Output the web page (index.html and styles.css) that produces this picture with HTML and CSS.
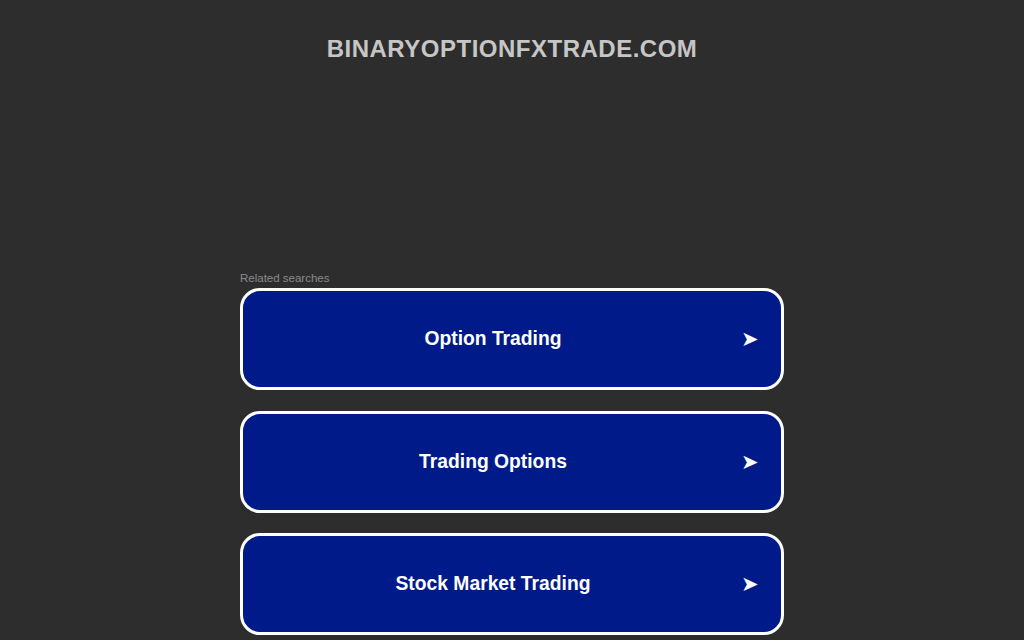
FILE: index.html
```html
<!DOCTYPE html>
<html lang="en">
<head>
    <meta charset="UTF-8">
    <meta name="viewport" content="width=device-width, initial-scale=1.0">
    <title>binaryoptionfxtrade.com</title>
    <link rel="stylesheet" href="styles.css">
</head>
<body>

<header>
    <h1>BINARYOPTIONFXTRADE.COM</h1>
</header>

<div class="container">
    <p class="related">Related searches</p>
    <!-- Search links -->
    <a class="search-item" href="#"><span>Option Trading</span><span class="arrow">&#10148;</span></a>
    <a class="search-item" href="#"><span>Trading Options</span><span class="arrow">&#10148;</span></a>
    <a class="search-item" href="#"><span>Stock Market Trading</span><span class="arrow">&#10148;</span></a>
</div>

</body>
</html>
```

FILE: styles.css
```css
body {
    font-family: "Liberation Sans", Arial, sans-serif;
    background-color: #2d2d2d;
    margin: 0;
    padding: 0;
    color: #fff;
}
header {
    text-align: center;
    padding-top: 35px;
}
h1 {
    margin: 0;
    font-size: 24px;
    line-height: 28px;
    color: #c6c6c6;
    letter-spacing: 0.5px;
}
.container {
    width: 544px;
    margin: 207px auto 0;
}
.related {
    margin: 0 0 3px;
    padding-top: 2px;
    font-size: 11.5px;
    line-height: 13px;
    color: #8a8a8a;
}
.search-item {
    position: relative;
    display: flex;
    align-items: center;
    justify-content: center;
    box-sizing: border-box;
    height: 102px;
    margin-bottom: 20.5px;
    padding-right: 38px;
    background-color: #001a8a;
    border: 3px solid #fff;
    border-radius: 20px;
    color: #fff;
    font-size: 19.3px;
    font-weight: bold;
    text-decoration: none;
}
.arrow {
    position: absolute;
    right: 22px;
    top: 50%;
    transform: translateY(-50%);
    font-size: 21px;
    font-weight: normal;
}
```
